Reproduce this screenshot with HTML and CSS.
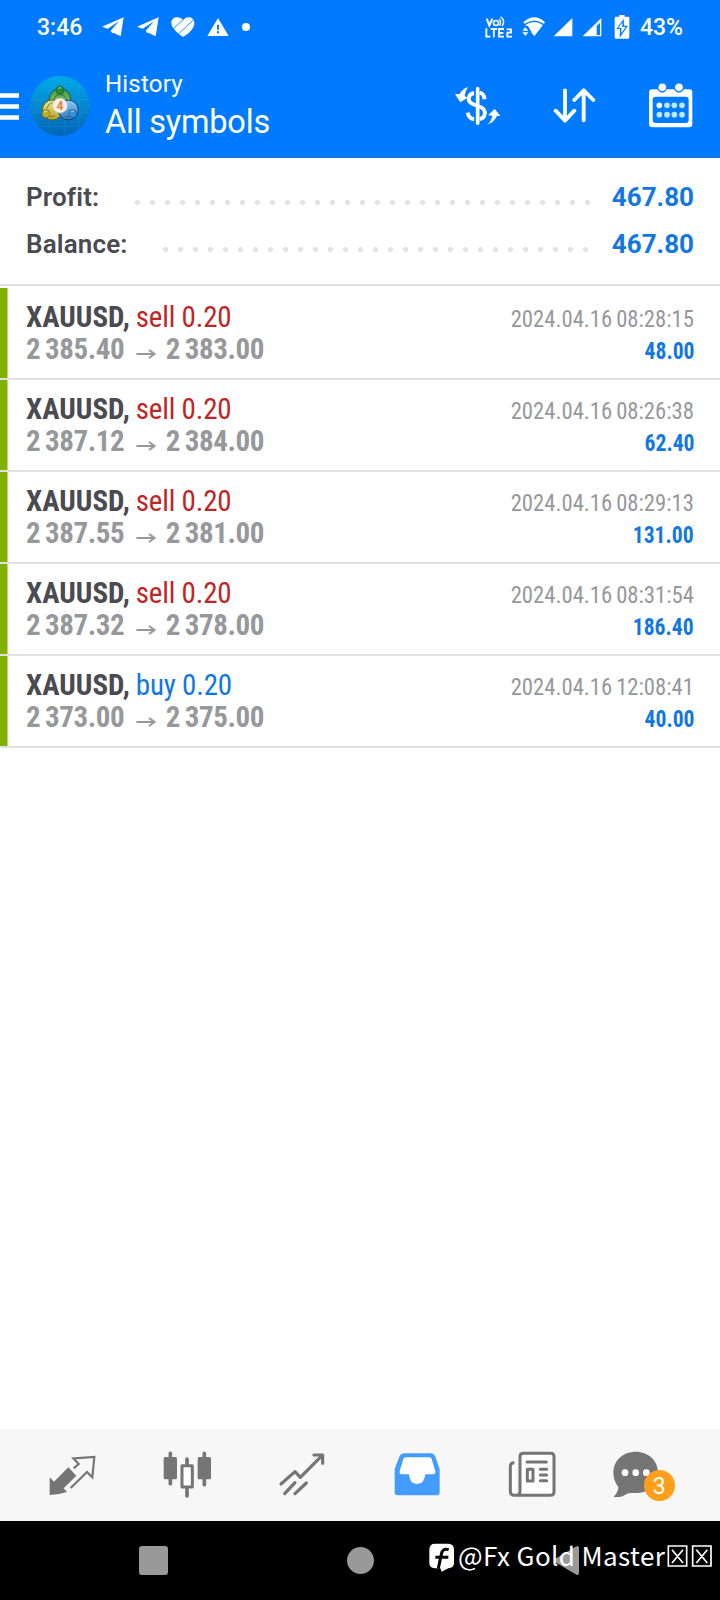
FILE: index.html
```html
<!DOCTYPE html>
<html lang="en">
<head>
<meta charset="utf-8">
<title>History</title>
<link rel="stylesheet" href="styles.css">
</head>
<body>
<div class="screen">
  <header class="header">
    <div class="status">
      <div class="status-left">
        <span class="clock">3:46</span>
        <svg class="tg" width="22" height="20" viewBox="305 52 66 60"><path d="M305 81 370 53 361 110 339 99 336 101 331 93 356 65 322 87Z" fill="#fff"/></svg>
        <svg class="tg2" width="22" height="20" viewBox="305 52 66 60"><path d="M305 81 370 53 361 110 339 99 336 101 331 93 356 65 322 87Z" fill="#fff"/></svg>
        <svg class="heart" width="24" height="22" viewBox="512 46 72 66"><path d="M548 109C536 101 513 83 513 67 513 56 521 50 530 50 538 50 544 54 548 57 552 54 558 49 567 50 576 51 583 58 582 69 580 87 560 102 548 109Z" fill="#fff"/><path d="M516 87 556 50M532 102 580 57" stroke="#007aff" stroke-width="2.5"/></svg>
        <svg class="warn" width="22" height="20" viewBox="620 48 66 60"><path d="M653 51 685 105H621Z" fill="#fff"/><path d="M653 71V86M653 91V97" stroke="#007aff" stroke-width="6"/></svg>
        <svg class="dot" width="8" height="8" viewBox="0 0 8 8"><circle cx="4" cy="4" r="4" fill="#fff"/></svg>
      </div>
      <div class="status-right">
        <svg width="28" height="24" viewBox="132 44 84 72" fill="none" stroke="#fff" stroke-width="6"><path d="M137 55 145 75 154 55"/><circle cx="165" cy="68" r="7.500" stroke-width="5"/><path d="M175 56Q182 65 176 76M179 49Q195 62 183 77" stroke-width="4"/><path d="M136 84V109H148M149 86H168M158.500 86V111M189 86H174V109H189M174 98H187M197 87H210V97H199V109H213" stroke-width="5.500"/></svg>
        <svg class="wifi" width="24" height="22" viewBox="244 48 72 66"><path d="M248 67Q281 37 313 67L281 109Z" fill="#fff"/><path d="M252 74Q281 53 309 74" stroke="#007aff" stroke-width="4.500" fill="none"/><path d="M240 78H262L272 95V114H240Z" fill="#007aff"/><path d="M245 92 254 82 263 92ZM245 97 254 108 263 97Z" fill="#fff"/></svg>
        <svg class="sig1" width="20" height="20" viewBox="338 50 60 60"><path d="M396 53V108H340Z" fill="#fff"/></svg>
        <svg class="sig2" width="20" height="20" viewBox="425 50 60 60"><path d="M483 53V108H427Z" fill="#fff"/><path d="M469 77 479 67V104H469Z" fill="#007aff"/></svg>
        <svg class="batt" width="16" height="26" viewBox="521 40 48 78"><path d="M537 43H553V48H563Q567 48 567 52V110Q567 114 563 114H527Q523 114 523 110V52Q523 48 527 48H537Z" fill="#fff"/><path d="M550 54 528 85H539L538 111 563 75H551Z" fill="#007aff"/><path d="M546 65 534 82H543L543 98 556 79H546Z" fill="#fff"/></svg>
        <span class="pct">43%</span>
      </div>
    </div>
    <div class="toolbar">
      <svg class="menu" width="19" height="30" viewBox="0 0 19 30"><path d="M0 4.500H19M0 15.500H19M0 26.500H19" stroke="#fff" stroke-width="4.500"/></svg>
      <svg class="logo" width="60" height="62" viewBox="90 224 180 186">
        <defs>
          <linearGradient id="sky" x1="0" y1="0" x2="0" y2="1"><stop offset="0" stop-color="#00a9e8"/><stop offset=".5" stop-color="#0788cf"/><stop offset="1" stop-color="#0564b6"/></linearGradient>
          <clipPath id="disc"><circle cx="180" cy="317" r="90"/></clipPath>
          <linearGradient id="lgGreen" x1="0" y1="0" x2="0" y2="1"><stop offset="0" stop-color="#3f9a45"/><stop offset="1" stop-color="#a5cf7e"/></linearGradient>
          <linearGradient id="lgYellow" x1="0" y1="0" x2="0" y2="1"><stop offset="0" stop-color="#f0e88c"/><stop offset="1" stop-color="#b9a02c"/></linearGradient>
          <linearGradient id="lgBlue" x1="0" y1="0" x2="0" y2="1"><stop offset="0" stop-color="#8ccdf0"/><stop offset="1" stop-color="#2a78c0"/></linearGradient>
        </defs>
        <circle cx="180" cy="317" r="90" fill="url(#sky)"/>
        <path d="M105 220V410M149 220V410M193 220V410M237 220V410M90 258H270M90 298H270M90 338H270M90 378H270" stroke="#39b6e9" stroke-width="1.500" opacity=".35" clip-path="url(#disc)"/>
        <circle cx="180" cy="297" r="32" fill="url(#lgGreen)" stroke="#23572b" stroke-width="3"/>
        <circle cx="157" cy="329" r="30" fill="url(#lgYellow)" stroke="#5f6315" stroke-width="3"/>
        <circle cx="205" cy="329" r="30" fill="url(#lgBlue)" stroke="#123f77" stroke-width="3"/>
        <path d="M161 300Q165 283 180 283T200 300M140 325Q144 310 158 306M165 346Q152 352 144 345M196 348Q210 354 220 340" fill="none" stroke="#35502d" stroke-width="3" opacity=".6"/>
        <circle cx="180" cy="270" r="12" fill="#298b38" stroke="#185b27" stroke-width="2"/>
        <circle cx="138" cy="340" r="12" fill="#c7ae27" stroke="#6c6313" stroke-width="2"/>
        <circle cx="218" cy="340" r="12" fill="#3891d9" stroke="#15548f" stroke-width="2"/>
        <path d="M174 265Q178 260 183 263M132 335Q136 330 142 333M212 335Q216 330 222 333" stroke="#e6f6df" stroke-width="3" fill="none" opacity=".7"/>
        <circle cx="180" cy="316" r="22" fill="#f5f1ec" stroke="#d2d1c4" stroke-width="2"/>
        <text x="180" y="329" text-anchor="middle" class="logo-num">4</text>
      </svg>
      <div class="titles">
        <div class="title-small">History</div>
        <div class="title-big">All symbols</div>
      </div>
      <svg class="act-dollar" width="48" height="42" viewBox="42 254 144 126" fill="none" stroke="#fff">
        <path d="M113 265V369" stroke-width="11" stroke-linecap="round"/>
        <path d="M102 278C85 281 82 299 92 307 98 312 105 314 113 317 128 321 138 328 134 343 132 351 126 355 119 356M83 337Q86 354 102 357M119 277Q132 280 134 297" stroke-width="11.500"/>
        <path d="M84 261Q67 264 59 281L45 282 61 306 82 293 74 286Q75 273 84 261ZM142 372Q155 362 157 346L144 345 164 326 181 346 170 348Q162 368 142 372Z" fill="#fff" stroke="none"/>
      </svg>
      <svg class="act-sort" width="44" height="38" viewBox="339 261 132 114" fill="none" stroke="#fff" stroke-width="11.500" stroke-linecap="round" stroke-linejoin="round"><path d="M375 271V361M347 332 375 362 403 332M431 361V271M403 300 431 271 460 300"/></svg>
      <svg class="act-cal" width="46" height="46" viewBox="624 247 138 138"><path d="M637 266H652Q658 276 667 276 675 276 681 266H702Q708 276 717 276 726 276 732 266H748Q757 266 757 275V370Q757 380 748 380H637Q627 380 627 370V275Q627 266 637 266Z" fill="#fff"/><rect x="638" y="288" width="108" height="79" rx="9" fill="#007aff"/><circle cx="667" cy="260" r="11.500" fill="#fff"/><circle cx="717" cy="260" r="11.500" fill="#fff"/><g fill="#bfe7ff"><circle cx="658" cy="314" r="8.500" fill="#fff"/><circle cx="681" cy="314" r="8.500"/><circle cx="703" cy="314" r="8.500"/><circle cx="726" cy="314" r="8.500"/><circle cx="658" cy="342" r="8.500"/><circle cx="681" cy="342" r="8.500"/><circle cx="703" cy="342" r="8.500"/><circle cx="726" cy="342" r="8.500"/></g></svg>
    </div>
  </header>

  <section class="summary">
    <div class="sum-row"><span class="sum-label">Profit:</span><span class="leader leader-profit"></span><span class="sum-value">467.80</span></div>
    <div class="sum-row"><span class="sum-label">Balance:</span><span class="leader leader-balance"></span><span class="sum-value">467.80</span></div>
  </section>

  <main class="deals">
    <article class="deal"><div class="line"><span class="symbol">XAUUSD,</span><span class="side sell">sell 0.20</span><time class="date">2024.04.16 08:28:15</time></div><div class="line line2"><span class="price">2 385.40</span><svg class="arrow" width="20" height="10" viewBox="0 0 20 10"><path d="M0.500 5H17.500M13 1 18.500 5 13 9" fill="none" stroke="#96989b" stroke-width="2"/></svg><span class="price">2 383.00</span><span class="gain">48.00</span></div></article>
    <article class="deal"><div class="line"><span class="symbol">XAUUSD,</span><span class="side sell">sell 0.20</span><time class="date">2024.04.16 08:26:38</time></div><div class="line line2"><span class="price">2 387.12</span><svg class="arrow" width="20" height="10" viewBox="0 0 20 10"><path d="M0.500 5H17.500M13 1 18.500 5 13 9" fill="none" stroke="#96989b" stroke-width="2"/></svg><span class="price">2 384.00</span><span class="gain">62.40</span></div></article>
    <article class="deal"><div class="line"><span class="symbol">XAUUSD,</span><span class="side sell">sell 0.20</span><time class="date">2024.04.16 08:29:13</time></div><div class="line line2"><span class="price">2 387.55</span><svg class="arrow" width="20" height="10" viewBox="0 0 20 10"><path d="M0.500 5H17.500M13 1 18.500 5 13 9" fill="none" stroke="#96989b" stroke-width="2"/></svg><span class="price">2 381.00</span><span class="gain">131.00</span></div></article>
    <article class="deal"><div class="line"><span class="symbol">XAUUSD,</span><span class="side sell">sell 0.20</span><time class="date">2024.04.16 08:31:54</time></div><div class="line line2"><span class="price">2 387.32</span><svg class="arrow" width="20" height="10" viewBox="0 0 20 10"><path d="M0.500 5H17.500M13 1 18.500 5 13 9" fill="none" stroke="#96989b" stroke-width="2"/></svg><span class="price">2 378.00</span><span class="gain">186.40</span></div></article>
    <article class="deal"><div class="line"><span class="symbol">XAUUSD,</span><span class="side buy">buy 0.20</span><time class="date">2024.04.16 12:08:41</time></div><div class="line line2"><span class="price">2 373.00</span><svg class="arrow" width="20" height="10" viewBox="0 0 20 10"><path d="M0.500 5H17.500M13 1 18.500 5 13 9" fill="none" stroke="#96989b" stroke-width="2"/></svg><span class="price">2 375.00</span><span class="gain">40.00</span></div></article>
  </main>

  <nav class="tabs">
    <svg class="tab" width="50" height="50" viewBox="142 89 150 150"><path d="M206 141 230 166 192 204 202 215Q180 222 150 224V171L163 184Z" fill="#757575"/><path d="M222 144 237 131 221 114 284 110 278 171 262 155 213 203" fill="none" stroke="#757575" stroke-width="6.500"/></svg>
    <svg class="tab" width="50" height="50" viewBox="487 89 150 150"><g fill="#757575"><rect x="492" y="110" width="40" height="67" rx="5"/><rect x="594" y="110" width="40" height="67" rx="5"/></g><path d="M512 99V190M614 99V193M562 116V130M562 206V227" stroke="#757575" stroke-width="11" stroke-linecap="round"/><rect x="547" y="136" width="31" height="64" rx="1" fill="#fff" stroke="#757575" stroke-width="9"/></svg>
    <svg class="tab" width="50" height="50" viewBox="832 89 150 150" fill="none" stroke="#757575" stroke-width="9.500" stroke-linecap="round" stroke-linejoin="round"><path d="M844 191 886 154 902 171 967 106M943 104H969V129M855 220 886 187M886 220 920 188"/></svg>
    <svg class="tab" width="50" height="50" viewBox="97 89 150 150"><path d="M132 99H214Q222 99 226 107L240 146V216Q240 225 231 225H114Q105 225 105 216V146L120 107Q124 99 132 99Z" fill="#439cff"/><path d="M138 111H209Q214 111 216 116L227 153Q228 162 220 162H197Q194 191 172 191 150 191 148 162H126Q118 161 120 153L131 116Q133 111 138 111Z" fill="#fff"/></svg>
    <svg class="tab" width="50" height="50" viewBox="444 89 150 150"><path d="M466 127Q454 127 454 138V212Q454 225 466 225H575Q585 225 585 215V109Q585 99 575 99H493Q483 99 483 109V213Q483 225 472 225" fill="#fff" stroke="#757575" stroke-width="9"/><path d="M504 125H562M544 147H563M544 164H563M544 181H563" stroke="#757575" stroke-width="9" stroke-linecap="round"/><rect x="505" y="147" width="17" height="35" fill="#fff" stroke="#757575" stroke-width="9" stroke-linejoin="round"/></svg>
    <div class="tab chat">
      <svg width="50" height="50" viewBox="757 89 150 150"><path d="M828 94C866 94 895 120 895 157S866 218 828 218C816 218 806 217 797 223 786 230 775 231 762 230 770 221 777 209 776 200 767 188 761 174 761 157 761 121 790 94 828 94Z" fill="#757575"/><g fill="#fff"><circle cx="796" cy="157" r="10"/><circle cx="828" cy="157" r="10"/><circle cx="860" cy="157" r="10"/></g></svg>
      <span class="badge">3</span>
    </div>
  </nav>

  <footer class="sysnav">
    <span class="recent"></span>
    <span class="home"></span>
    <svg class="back" width="27" height="31" viewBox="0 0 27 31"><path d="M1 14.500 23 1.500Q26 0 26 3V28Q26 31 23 29.500L1 16.500Q0 15.500 1 14.500Z" fill="#999"/></svg>
    <div class="mark">
      <svg width="26" height="30" viewBox="208 370 78 90"><path d="M225 372H266Q283 372 283 390V431Q283 445 266 446L246 456 242 446H225Q209 445 209 430V389Q210 372 225 372Z" fill="#fff"/><path d="M267 390Q249 384 245 404L236 446M227 413H266" fill="none" stroke="#000" stroke-width="9"/></svg>
      <span class="mark-text">@Fx Gold Master</span>
      <svg class="boxes" width="45" height="24" viewBox="922 372 135 72" fill="none" stroke="#fff" stroke-width="5"><path d="M926 378H981V438H926ZM937 389 970 429M970 389 937 429M999 378H1054V438H999ZM1010 389 1043 429M1043 389 1010 429"/></svg>
    </div>
  </footer>
</div>
</body>
</html>
```
FILE: styles.css
```css
* { box-sizing: border-box; }
body { margin: 0; background: #fff; font-family: Roboto, "Liberation Sans", sans-serif; }
svg { display: block; flex: none; }
span, time { white-space: nowrap; }
.screen { width: 720px; height: 1600px; display: flex; flex-direction: column; overflow: hidden; }

.header { height: 158px; flex: none; background: #007aff; color: #fff; border-bottom: 1px solid #1a6fd0; }
.status { height: 54px; display: flex; justify-content: space-between; align-items: center; padding: 0 37px 0 37px; }
.status-left, .status-right { display: flex; align-items: center; }
.clock, .pct { font-size: 23px; font-weight: 500; line-height: 52px; padding-top: 2px; }
.clock { width: 65px; }
.tg2 { margin-left: 13px; }
.heart { margin-left: 12px; }
.warn { margin-left: 12px; }
.dot { margin-left: 13px; }
.wifi { margin-left: 9px; }
.sig1 { margin-left: 7px; }
.sig2 { margin-left: 9px; }
.batt { margin-left: 12px; }
.pct { margin-left: 10px; }

.toolbar { height: 103px; display: flex; align-items: center; }
.menu { margin-top: 1px; }
.logo { margin: 0 0 0 11px; }
.logo-num { font: bold 36px Roboto, sans-serif; fill: #ee7b35; }
.titles { width: 350px; margin-left: 15px; padding-top: 4px; }
.title-small { font-size: 24px; line-height: 29px; letter-spacing: .2px; }
.title-big { font-size: 32.500px; line-height: 47px; letter-spacing: -.2px; }
.act-dollar { margin-left: -1px; }
.act-sort { margin-left: 51px; }
.act-cal { margin-left: 51px; }

.summary { height: 128px; flex: none; padding-top: 15px; border-bottom: 2px solid #e2e2e2; }
.sum-row { height: 47px; display: flex; align-items: center; padding: 0 26px; font-size: 26px; }
.sum-label { font-weight: 600; color: #4a4a50; letter-spacing: .15px; }
.sum-value { width: 84px; text-align: right; font-weight: 700; color: #1277e0; }
.leader { height: 5px; margin: 12px 15px 0 auto; background: radial-gradient(circle at 7.500px 2.500px, #e3e3e3 2.200px, transparent 2.800px) 0 0 / 15px 5px repeat-x; }
.leader-profit { width: 465px; }
.leader-balance { width: 435px; margin-right: 17px; }

.deals { padding-top: 2px; flex: 1; }
.deal { height: 92px; border-bottom: 2px solid #e2e2e2; padding: 12px 26px 0; background: linear-gradient(#80b000, #80b000) 0 0 / 7.500px 100% no-repeat; }
.line { height: 32px; display: flex; align-items: baseline; font-family: "Roboto Condensed", Roboto, sans-serif; font-stretch: 75%; font-size: 29px; line-height: 34px; }
.symbol { font-weight: 700; color: #4a4a50; }
.side { margin-left: 6px; letter-spacing: -.2px; }
.sell { color: #bd2727; }
.buy { color: #1277e0; }
.date, .gain { margin-left: auto; font-size: 24px; transform-origin: 100% 50%; }
.date { color: #96989b; word-spacing: -1.300px; transform: scaleX(.945); }
.price { font-weight: 700; color: #96989b; word-spacing: -1.500px; letter-spacing: -.42px; }
.arrow { margin: 0 10px 0 11.500px; }
.gain { font-weight: 700; color: #1277e0; transform: scaleX(.9); }

.tabs { height: 92px; flex: none; background: #f7f7f7; display: flex; align-items: flex-start; gap: 65px; padding: 20.500px 0 0 47.300px; }
.chat { position: relative; width: 50px; margin-left: -10.500px; }
.badge { position: absolute; left: 32px; top: 20px; width: 31px; height: 31px; border-radius: 50%; background: #ff9f1c; color: #fff; font-size: 23px; line-height: 33px; text-align: center; }

.sysnav { position: relative; height: 79px; flex: none; background: #000; display: flex; align-items: center; padding-left: 139px; }
.recent { width: 29px; height: 29px; border-radius: 3px; background: #999; }
.home { width: 27px; height: 27px; border-radius: 50%; background: #999; margin-left: 179px; }
.back { margin-left: 179px; }
.mark { position: absolute; left: 429px; top: 20px; height: 34px; display: flex; align-items: center; color: #fff; }
.mark-text { width: 206px; margin: -7px 0 0 3px; font-family: "Noto Sans CJK SC", "Noto Sans", sans-serif; font-size: 26px; line-height: 32px; letter-spacing: .4px; }
.boxes { margin: -5px 0 0 3px; }
```
